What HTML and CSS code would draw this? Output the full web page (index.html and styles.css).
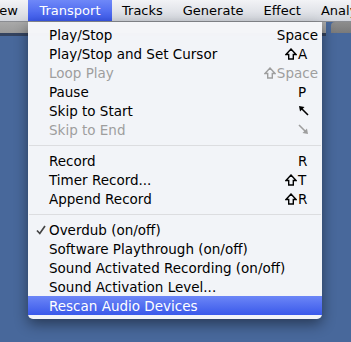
FILE: index.html
```html
<!DOCTYPE html>
<html lang="en">
<head>
    <meta charset="UTF-8">
    <title>Transport Menu</title>
    <link rel="stylesheet" href="styles.css">
</head>
<body>
    <div class="menubar">
        <div class="menubar-item clipped"><span>View</span></div>
        <div class="menubar-item active">Transport</div>
        <div class="menubar-item">Tracks</div>
        <div class="menubar-item">Generate</div>
        <div class="menubar-item">Effect</div>
        <div class="menubar-item">Analyze</div>
    </div>

    <div class="desktop">
        <div class="window-bar"></div>
        <div class="window-bar back"></div>
    </div>

    <div class="menu">
        <div class="menu-item">
            <span class="label">Play/Stop</span>
            <span class="shortcut"><span class="key">Space</span></span>
        </div>
        <div class="menu-item">
            <span class="label">Play/Stop and Set Cursor</span>
            <span class="shortcut">
                <svg class="shift" width="12" height="12" viewBox="0 0 12 12"><path d="M6 1 L11 6.5 H8.3 V11 H3.7 V6.5 H1 Z"/></svg>
                <span class="key">A</span>
            </span>
        </div>
        <div class="menu-item disabled">
            <span class="label">Loop Play</span>
            <span class="shortcut">
                <svg class="shift" width="12" height="12" viewBox="0 0 12 12"><path d="M6 1 L11 6.5 H8.3 V11 H3.7 V6.5 H1 Z"/></svg>
                <span class="key">Space</span>
            </span>
        </div>
        <div class="menu-item">
            <span class="label">Pause</span>
            <span class="shortcut"><span class="key">P</span></span>
        </div>
        <div class="menu-item">
            <span class="label">Skip to Start</span>
            <span class="shortcut"><span class="key">
                <svg class="arrow" width="11" height="11" viewBox="0 0 11 11">
                    <path d="M10 10 L3 3" stroke="currentColor" stroke-width="1.6" fill="none"/>
                    <path d="M1 1 L6.5 2 L2 6.5 Z" fill="currentColor"/>
                </svg>
            </span></span>
        </div>
        <div class="menu-item disabled">
            <span class="label">Skip to End</span>
            <span class="shortcut"><span class="key">
                <svg class="arrow" width="11" height="11" viewBox="0 0 11 11">
                    <path d="M1 1 L8 8" stroke="currentColor" stroke-width="1.6" fill="none"/>
                    <path d="M10 10 L4.5 9 L9 4.5 Z" fill="currentColor"/>
                </svg>
            </span></span>
        </div>

        <div class="separator"></div>

        <div class="menu-item">
            <span class="label">Record</span>
            <span class="shortcut"><span class="key">R</span></span>
        </div>
        <div class="menu-item">
            <span class="label">Timer Record...</span>
            <span class="shortcut">
                <svg class="shift" width="12" height="12" viewBox="0 0 12 12"><path d="M6 1 L11 6.5 H8.3 V11 H3.7 V6.5 H1 Z"/></svg>
                <span class="key">T</span>
            </span>
        </div>
        <div class="menu-item">
            <span class="label">Append Record</span>
            <span class="shortcut">
                <svg class="shift" width="12" height="12" viewBox="0 0 12 12"><path d="M6 1 L11 6.5 H8.3 V11 H3.7 V6.5 H1 Z"/></svg>
                <span class="key">R</span>
            </span>
        </div>

        <div class="separator"></div>

        <div class="menu-item">
            <svg class="check" width="10" height="10" viewBox="0 0 10 10">
                <path d="M1 5.5 L3.8 8.5 L9 1" stroke="#444" stroke-width="1.7" fill="none"/>
            </svg>
            <span class="label">Overdub (on/off)</span>
        </div>
        <div class="menu-item">
            <span class="label">Software Playthrough (on/off)</span>
        </div>
        <div class="menu-item">
            <span class="label">Sound Activated Recording (on/off)</span>
        </div>
        <div class="menu-item">
            <span class="label">Sound Activation Level...</span>
        </div>
        <div class="menu-item selected">
            <span class="label">Rescan Audio Devices</span>
        </div>
    </div>
</body>
</html>
```

FILE: styles.css
```css
body {
    margin: 0;
    height: 342px;
    overflow: hidden;
    background-color: #48689b;
    font-family: "DejaVu Sans", "Noto Sans", sans-serif;
    font-size: 13.5px;
    color: #000;
}

.menubar {
    display: flex;
    height: 21px;
    line-height: 21px;
    font-size: 13px;
    background: linear-gradient(#f2f3f6, #d3d6dd);
    border-bottom: 1px solid #8b8d92;
    white-space: nowrap;
    overflow: hidden;
}

.menubar-item {
    flex-shrink: 0;
    padding: 0 10px;
}

.menubar-item.clipped {
    display: flex;
    justify-content: flex-end;
    width: 18px;
    padding: 0 10px 0 0;
    overflow: hidden;
}

.menubar-item.clipped span {
    flex-shrink: 0;
}

.menubar-item.active {
    width: 64px;
    text-align: center;
    color: #fff;
    background: linear-gradient(#6f88f8, #3a58ea);
}

.desktop {
    display: flex;
    gap: 5px;
}

.window-bar {
    flex-shrink: 0;
    width: 326px;
    height: 11px;
    background: linear-gradient(#a9a9a9, #9a9a9a);
    border-bottom: 3px solid #34435f;
}

.window-bar.back {
    flex: 1;
    background: linear-gradient(#8d8d8d, #7a7a7a);
    border-bottom: none;
    border-top-left-radius: 4px;
}

.menu {
    position: absolute;
    top: 22px;
    left: 28px;
    width: 294px;
    padding: 3px 0 4px;
    background: rgba(246, 247, 250, 0.98);
    border-radius: 0 0 5px 5px;
    box-shadow: 0 5px 14px rgba(0, 0, 0, 0.45);
}

.menu-item {
    position: relative;
    display: flex;
    align-items: center;
    height: 19px;
    padding: 0 4px 0 21px;
    white-space: nowrap;
}

.menu-item .label {
    flex: 1;
}

.menu-item.disabled {
    color: #9e9e9e;
}

.menu-item.selected {
    color: #fff;
    background: linear-gradient(#6c86f7, #3a59ea);
}

.shortcut {
    display: flex;
    align-items: center;
}

.shift {
    display: block;
    margin-right: 1px;
}

.shift path {
    fill: none;
    stroke: currentColor;
    stroke-width: 1.4;
    stroke-linejoin: miter;
}

.shortcut .key {
    display: flex;
    align-items: center;
    min-width: 20px;
}

.arrow {
    display: block;
}

.check {
    position: absolute;
    left: 8px;
    top: 5px;
}

.separator {
    height: 1px;
    margin: 6px 1px 5px;
    background-color: #dcdde0;
}
```
